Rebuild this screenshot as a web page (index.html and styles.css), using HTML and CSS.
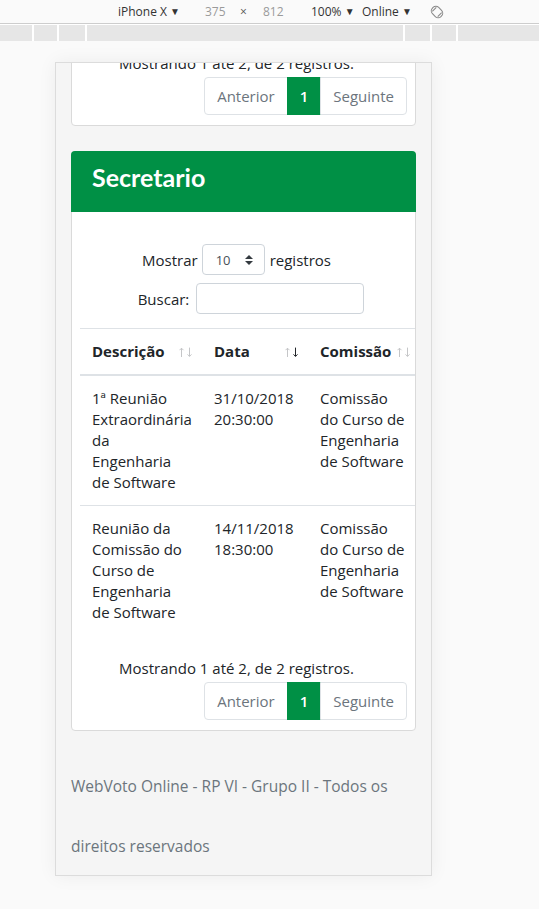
FILE: index.html
```html
<!DOCTYPE html>
<html lang="pt-BR">
<head>
<meta charset="utf-8">
<title>WebVoto Online</title>
<link rel="stylesheet" href="styles.css">
</head>
<body>
<div class="toolbar">
  <span class="tb-device">iPhone X <span class="tri">▼</span></span>
  <span class="tb-dim tb-w">375</span>
  <span class="tb-times">×</span>
  <span class="tb-dim tb-h">812</span>
  <span class="tb-zoom">100% <span class="tri">▼</span></span>
  <span class="tb-net">Online <span class="tri">▼</span></span>
  <svg class="tb-rotate" width="14" height="14" viewBox="0 0 14 14"><g transform="rotate(-45 7 7)" fill="none" stroke="#8a8a8a" stroke-width="1.1"><rect x="2.6" y="1" width="8.8" height="12" rx="4"/><path d="M4.2 3.2H9.8M4.2 10.8H9.8"/></g></svg>
</div>
<div class="ruler-wrap">
  <div class="ruler">
    <div class="seg s1"></div><div class="seg s2"></div><div class="seg s3"></div><div class="seg s4"></div><div class="seg s5"></div><div class="seg s6"></div><div class="seg s7"></div>
  </div>
</div>
<div class="stage">
  <div class="device">
    <div class="screen">
      <div class="card card-first">
        <div class="card-body">
          <div class="info">Mostrando 1 até 2, de 2 registros.</div>
          <ul class="pagination">
            <li class="page-item disabled"><span class="page-link first">Anterior</span></li>
            <li class="page-item active"><span class="page-link">1</span></li>
            <li class="page-item disabled"><span class="page-link last">Seguinte</span></li>
          </ul>
        </div>
      </div>

      <div class="card card-second">
        <div class="card-header"><h3 class="card-title">Secretario</h3></div>
        <div class="card-body body-main">
          <div class="length-row">
            <span>Mostrar</span>
            <div class="select"><span class="select-val">10</span><svg class="select-caret" width="8" height="10" viewBox="0 0 4 5"><path d="M2 0L0 2h4zm0 5L0 3h4z" fill="#343a40"/></svg></div>
            <span>registros</span>
          </div>
          <div class="filter-row">
            <span>Buscar:</span>
            <div class="input"></div>
          </div>
          <div class="table-wrap">
            <table class="table">
              <thead>
                <tr>
                  <th class="c1">Descrição<span class="sort"><svg width="14" height="11" viewBox="0 0 14 11"><g fill="none" stroke-width="1"><path d="M2.5 1.2V10M0.5 3.2L2.5 1.2L4.5 3.2" stroke="#c5c6c8"/><path d="M10.5 0.6V9.4M8.5 7.4L10.5 9.4L12.5 7.4" stroke="#c5c6c8"/></g></svg></span></th>
                  <th class="c2">Data<span class="sort"><svg width="14" height="11" viewBox="0 0 14 11"><g fill="none" stroke-width="1"><path d="M2.5 1.2V10M0.5 3.2L2.5 1.2L4.5 3.2" stroke="#c5c6c8"/><path d="M10.5 0.6V9.4M8.5 7.4L10.5 9.4L12.5 7.4" stroke="#212529"/></g></svg></span></th>
                  <th class="c3">Comissão<span class="sort"><svg width="14" height="11" viewBox="0 0 14 11"><g fill="none" stroke-width="1"><path d="M2.5 1.2V10M0.5 3.2L2.5 1.2L4.5 3.2" stroke="#c5c6c8"/><path d="M10.5 0.6V9.4M8.5 7.4L10.5 9.4L12.5 7.4" stroke="#c5c6c8"/></g></svg></span></th>
                </tr>
              </thead>
              <tbody>
                <tr>
                  <td>1ª Reunião Extraordinária da Engenharia de Software</td>
                  <td>31/10/2018 20:30:00</td>
                  <td>Comissão do Curso de Engenharia de Software</td>
                </tr>
                <tr class="row-next">
                  <td>Reunião da Comissão do Curso de Engenharia de Software</td>
                  <td>14/11/2018 18:30:00</td>
                  <td>Comissão do Curso de Engenharia de Software</td>
                </tr>
              </tbody>
            </table>
          </div>
          <div class="info info-bottom">Mostrando 1 até 2, de 2 registros.</div>
          <ul class="pagination">
            <li class="page-item disabled"><span class="page-link first">Anterior</span></li>
            <li class="page-item active"><span class="page-link">1</span></li>
            <li class="page-item disabled"><span class="page-link last">Seguinte</span></li>
          </ul>
        </div>
      </div>

      <footer class="footer">WebVoto Online - RP VI - Grupo II - Todos os direitos reservados</footer>
    </div>
  </div>
</div>
</body>
</html>
```

FILE: styles.css
```css
* { box-sizing: border-box; }
html, body { margin: 0; padding: 0; }
body {
  width: 539px;
  height: 909px;
  overflow: hidden;
  background: #fafafa;
  font-family: "Open Sans", "Liberation Sans", sans-serif;
  color: #212529;
}

/* devtools toolbar */
.toolbar {
  height: 24px;
  border-bottom: 1px solid #cdcdcd;
  background: #fafafa;
  display: flex;
  align-items: center;
  padding-left: 118px;
  font-size: 12px;
  color: #333;
  white-space: nowrap;
}
.tri { font-size: 10px; position: relative; top: -1px; }
.tb-device { width: 87px; }
.tb-dim { color: #9a9a9a; }
.tb-w { width: 35px; }
.tb-times { width: 23px; color: #555; }
.tb-h { width: 48px; }
.tb-zoom { width: 51px; }
.tb-net { width: 68px; }
.tb-rotate { display: block; }

.ruler-wrap { background: #fff; padding-top: 1px; }
.ruler { display: flex; gap: 2px; height: 16px; }
.seg { background: #e6e6e6; }
.s1 { width: 32px; }
.s2 { width: 23px; }
.s3 { width: 26px; }
.s4 { width: 316px; }
.s5 { width: 25px; }
.s6 { width: 24px; }
.s7 { flex: 1; }

/* emulated device */
.stage { padding: 21px 0 0 55px; }
.device {
  width: 377px;
  height: 814px;
  border: 1px solid #dcdcdc;
  background: #f5f5f5;
  box-shadow: 0 0 18px rgba(0, 0, 0, 0.06);
  overflow: hidden;
}
.screen { padding: 0 15px; font-size: 15px; }

/* cards */
.card {
  background: #fff;
  border: 1px solid #dadada;
  border-radius: 4px;
}
.card-first { margin-top: -21px; }
.card-second { margin-top: 25px; }
.card-body { padding: 8px; }
.body-main { padding-top: 32px; }

.card-header {
  margin: -1px -1px 0;
  height: 61px;
  background: #009045;
  border-radius: 4px 4px 0 0;
  padding: 11px 21px 0;
}
.card-title {
  margin: 0;
  font-family: Lato, "Open Sans", sans-serif;
  font-weight: 700;
  font-size: 25px;
  line-height: 30px;
  color: #fff;
}

/* datatables controls */
.length-row {
  display: flex;
  justify-content: center;
  align-items: center;
  height: 31px;
  padding-right: 14px;
}
.select {
  width: 63px;
  height: 31px;
  margin: 0 5px 0 4px;
  border: 1px solid #ced4da;
  border-radius: 4px;
  display: flex;
  align-items: center;
  padding: 0 11px 0 13px;
  font-size: 13px;
  color: #495057;
}
.select-caret { margin-left: auto; display: block; }

.filter-row {
  margin-top: 8px;
  display: flex;
  justify-content: center;
  align-items: center;
  padding-left: 15px;
}
.input {
  width: 168px;
  height: 31px;
  margin-left: 7px;
  border: 1px solid #ced4da;
  border-radius: 4px;
  background: #fff;
}

/* table */
.table-wrap {
  margin-top: 14px;
  margin-right: -8px;
  overflow: hidden;
}
.table {
  width: 340px;
  table-layout: fixed;
  border-collapse: separate;
  border-spacing: 0;
  line-height: 21px;
}
.table th {
  position: relative;
  text-align: left;
  font-weight: 700;
  padding: 12px 30px 12px 12px;
  border-top: 1px solid #dee2e6;
  border-bottom: 2px solid #dee2e6;
  vertical-align: bottom;
  white-space: nowrap;
}
.c1 { width: 122px; }
.c2 { width: 106px; }
.c3 { width: 112px; }
.sort {
  position: absolute;
  top: 18px;
  right: 9px;
  line-height: 0;
}
.table td {
  padding: 12px;
  vertical-align: top;
}
.row-next td { border-top: 1px solid #dee2e6; }

/* info + pagination */
.info {
  line-height: 24px;
  text-align: center;
  padding-right: 14px;
  white-space: nowrap;
}
.info-bottom { margin-top: 21px; }
.pagination {
  list-style: none;
  margin: 2px 0;
  padding: 0;
  display: flex;
  justify-content: flex-end;
}
.page-link {
  display: block;
  padding: 8px 12px;
  line-height: 20px;
  border: 1px solid #dee2e6;
  margin-left: -1px;
  background: #fff;
  color: #6c757d;
}
.page-link.first { margin-left: 0; border-radius: 4px 0 0 4px; }
.page-link.last { border-radius: 0 4px 4px 0; }
.active .page-link {
  background: #009045;
  border-color: #009045;
  color: #fff;
  font-weight: 600;
}

/* footer */
.footer {
  margin-top: 25px;
  line-height: 60px;
  font-size: 15.5px;
  color: #6c757d;
}
```
